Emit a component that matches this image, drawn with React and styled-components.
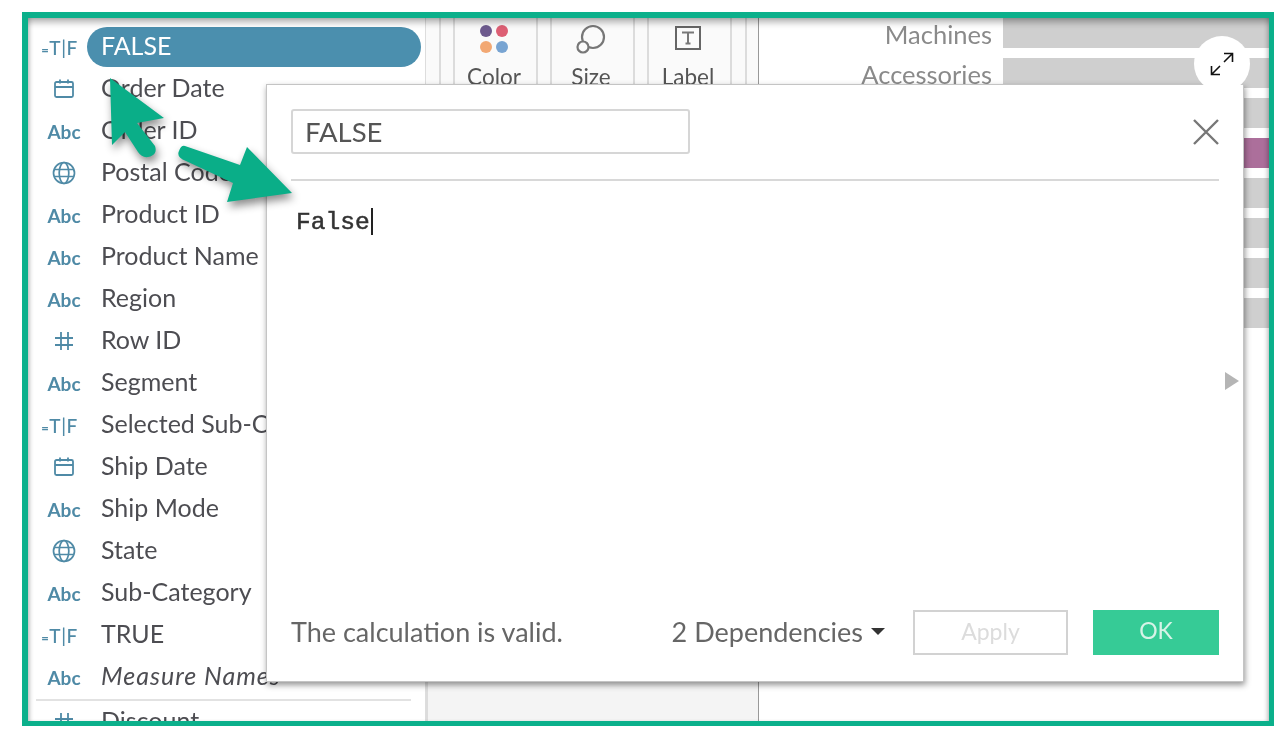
import styled, { createGlobalStyle } from 'styled-components';

const GlobalStyle = createGlobalStyle`
  html, body {
    margin: 0;
    padding: 0;
    background: #fff;
    font-family: "Lato", "Liberation Sans", sans-serif;
  }
`;

const FIELDS = [
  { type: 'bool', name: 'FALSE', active: true },
  { type: 'date', name: 'Order Date' },
  { type: 'abc', name: 'Order ID' },
  { type: 'geo', name: 'Postal Code' },
  { type: 'abc', name: 'Product ID' },
  { type: 'abc', name: 'Product Name' },
  { type: 'abc', name: 'Region' },
  { type: 'num', name: 'Row ID' },
  { type: 'abc', name: 'Segment' },
  { type: 'bool', name: 'Selected Sub-Category' },
  { type: 'date', name: 'Ship Date' },
  { type: 'abc', name: 'Ship Mode' },
  { type: 'geo', name: 'State' },
  { type: 'abc', name: 'Sub-Category' },
  { type: 'bool', name: 'TRUE' },
  { type: 'abc', name: 'Measure Names', italic: true },
];

const BARS = [
  { label: 'Machines' },
  { label: 'Accessories' },
  { label: '' },
  { label: '', hot: true },
  { label: '' },
  { label: '' },
  { label: '' },
  { label: '' },
];

const CalendarIcon = () => (
  <svg width="22" height="22" viewBox="0 0 22 22" fill="none" stroke="#4f8aa6" strokeWidth="1.8">
    <rect x="2" y="4" width="18" height="15" rx="1.5" />
    <path d="M2 9h18M7 1.5v4M15 1.5v4" />
  </svg>
);

const GlobeIcon = () => (
  <svg width="24" height="24" viewBox="0 0 24 24" fill="none" stroke="#4f8aa6" strokeWidth="1.7">
    <circle cx="12" cy="12" r="10.5" />
    <ellipse cx="12" cy="12" rx="4.8" ry="10.5" />
    <path d="M2 8.5h20M2 15.5h20" />
  </svg>
);

const HashIcon = () => (
  <svg width="22" height="22" viewBox="0 0 22 22" fill="none" stroke="#4f8aa6" strokeWidth="1.8">
    <path d="M8 2v18M15 2v18M2 8h18M2 15h18" />
  </svg>
);

const FieldIcon = ({ type }) => {
  if (type === 'date') return <CalendarIcon />;
  if (type === 'geo') return <GlobeIcon />;
  if (type === 'num') return <HashIcon />;
  if (type === 'bool') {
    return (
      <BoolMark>
        <small>=</small>T|F
      </BoolMark>
    );
  }
  return <AbcMark>Abc</AbcMark>;
};

const App = () => (
  <>
    <GlobalStyle />
    <Frame>
      <Sidebar>
        {FIELDS.map((field) => (
          <FieldRow key={field.name}>
            <IconCell>
              <FieldIcon type={field.type} />
            </IconCell>
            <FieldName $active={field.active} $italic={field.italic}>
              {field.name}
            </FieldName>
          </FieldRow>
        ))}
        <SideDivider />
        <FieldRow>
          <IconCell>
            <HashIcon />
          </IconCell>
          <FieldName>Discount</FieldName>
        </FieldRow>
      </Sidebar>

      <Shelves>
        <CardStrip>
          <Gutter $w={15} />
          <Gutter $w={14} />
          <MarkCard>
            <svg width="34" height="30" viewBox="0 0 34 30">
              <circle cx="9" cy="7" r="6" fill="#6d5a8e" />
              <circle cx="25" cy="7" r="6" fill="#dd5f74" />
              <circle cx="9" cy="23" r="6" fill="#f2a873" />
              <circle cx="25" cy="23" r="6" fill="#78a4d2" />
            </svg>
            <CardLabel>Color</CardLabel>
          </MarkCard>
          <Gutter $w={14} />
          <MarkCard>
            <svg width="30" height="30" viewBox="0 0 30 30" fill="none" stroke="#777" strokeWidth="2.2">
              <circle cx="17" cy="13" r="11" fill="#fafafa" />
              <circle cx="7" cy="23" r="5.5" fill="#fafafa" />
            </svg>
            <CardLabel>Size</CardLabel>
          </MarkCard>
          <Gutter $w={14} />
          <MarkCard>
            <svg width="30" height="30" viewBox="0 0 30 30" fill="none">
              <rect x="3" y="3" width="24" height="22" stroke="#666" strokeWidth="2" />
              <path d="M10 9.5v-1h10v1M15 8.5v11M12.5 19.5h5" stroke="#777" strokeWidth="2" />
            </svg>
            <CardLabel>Label</CardLabel>
          </MarkCard>
          <Gutter $w={15} />
        </CardStrip>
      </Shelves>

      <View>
        {BARS.map((bar, i) => (
          <BarRow key={i}>
            <BarLabel>{bar.label}</BarLabel>
            <Bar $hot={bar.hot} />
          </BarRow>
        ))}
      </View>

      <Dialog>
        <DialogHeader>
          <NameInput>FALSE</NameInput>
          <svg width="26" height="26" viewBox="0 0 26 26" stroke="#777" strokeWidth="2.4">
            <path d="M1 1l24 24M25 1L1 25" />
          </svg>
        </DialogHeader>
        <Editor>
          <Code>False</Code>
          <Caret />
          <SideArrow />
        </Editor>
        <DialogFooter>
          <ValidText>The calculation is valid.</ValidText>
          <Dependencies>
            2 Dependencies <DownCaret />
          </Dependencies>
          <ApplyButton>Apply</ApplyButton>
          <OkButton>OK</OkButton>
        </DialogFooter>
      </Dialog>

      <ExpandBadge>
        <svg width="24" height="24" viewBox="0 0 24 24" fill="none" stroke="#111" strokeWidth="1.6">
          <path d="M1.5 22.5L22.5 1.5M14 1.5h8.5V10M1.5 14v8.5H10" />
          <path d="M10 14l4-4" stroke="#fff" strokeWidth="4" />
        </svg>
      </ExpandBadge>

      <Arrows viewBox="22 12 1252 714" width="1252" height="714">
        <g fill="#0aae88">
          <path d="M110 78L164 118L137 123L155 146Q158 155 148 157Q142 158 138 152L125 132L112 145Z" />
          <path d="M185 146L240 165L247 147L292 193L227 202L233 183L186 161Q176 157 179 151Q181 145 185 146Z" />
        </g>
      </Arrows>
    </Frame>
  </>
);

export default App;

const Frame = styled.div`
  position: relative;
  display: flex;
  box-sizing: border-box;
  width: 1252px;
  height: 714px;
  margin: 12px 0 0 22px;
  border: 6px solid #0bb08b;
  border-bottom-width: 5px;
  border-right-width: 5px;
  overflow: hidden;
  background: #fff;
  filter: blur(0.5px);

  &::after {
    content: '';
    position: absolute;
    inset: 0;
    box-shadow: inset 0 7px 7px -3px rgba(0, 0, 0, 0.32), inset 4px 0 5px -3px rgba(0, 0, 0, 0.25),
      inset -4px 0 5px -3px rgba(0, 0, 0, 0.25);
    pointer-events: none;
  }
`;

const Sidebar = styled.div`
  flex: 0 0 398px;
  box-sizing: border-box;
  padding-top: 8px;
  border-right: 1px solid #ddd;
`;

const FieldRow = styled.div`
  display: flex;
  align-items: center;
  height: 42px;
`;

const IconCell = styled.div`
  display: flex;
  flex: 0 0 72px;
  align-items: center;
  justify-content: center;
`;

const AbcMark = styled.span`
  font-family: "Lato", sans-serif;
  font-size: 19px;
  font-weight: 700;
  color: #4f8aa6;
`;

const BoolMark = styled.span`
  font-family: "Lato", sans-serif;
  font-size: 19px;
  font-weight: 500;
  letter-spacing: 0.5px;
  color: #4f8aa6;
  margin-left: -9px;

  small {
    font-size: 13px;
    font-weight: 900;
  }
`;

const FieldName = styled.div`
  flex: 1;
  height: 40px;
  margin: 0 4px 0 -13px;
  padding-left: 14px;
  border-radius: 20px;
  font-size: 25px;
  line-height: 37px;
  letter-spacing: ${(p) => (p.$italic ? '1px' : '0')};
  font-style: ${(p) => (p.$italic ? 'italic' : 'normal')};
  color: ${(p) => (p.$active ? '#fff' : '#4d4d52')};
  background: ${(p) => (p.$active ? '#4b8fae' : 'transparent')};
  white-space: nowrap;
`;

const SideDivider = styled.div`
  height: 2px;
  margin: 1px 14px 0 8px;
  background: #e2e2e2;
`;

const Shelves = styled.div`
  flex: 0 0 333px;
  box-sizing: border-box;
  border-right: 1px solid #999;
  border-left: 2px solid #dcdcdc;
  background: #f4f4f4;
`;

const CardStrip = styled.div`
  display: flex;
  height: 80px;
  margin-left: -2px;
  background: #fafafa;
`;

const Gutter = styled.div`
  box-sizing: border-box;
  flex: 0 0 ${(p) => p.$w}px;
  border-right: 2px solid #dcdcdc;
`;

const MarkCard = styled.div`
  display: flex;
  flex-direction: column;
  align-items: center;
  box-sizing: border-box;
  flex: 0 0 83px;
  padding: 6px 3px 0 0;
  border-right: 2px solid #dcdcdc;
`;

const CardLabel = styled.div`
  margin-top: 9px;
  font-size: 22.5px;
  line-height: 28px;
  color: #555;
`;

const View = styled.div`
  flex: 1;
  min-width: 0;
`;

const BarRow = styled.div`
  display: flex;
  height: 40px;
`;

const BarLabel = styled.div`
  flex: 0 0 233px;
  padding-top: 2px;
  text-align: right;
  font-size: 25.5px;
  line-height: 28px;
  color: #8a8a8a;
`;

const Bar = styled.div`
  flex: 1;
  height: 30px;
  margin-left: 11px;
  background: ${(p) => (p.$hot ? '#ac6f9b' : '#cfcfcf')};
`;

const Dialog = styled.div`
  position: absolute;
  left: 238px;
  top: 66px;
  display: flex;
  flex-direction: column;
  box-sizing: border-box;
  width: 978px;
  height: 598px;
  padding: 24px 24px 26px;
  background: #fff;
  border: 1px solid #c4c4c4;
  box-shadow: 1px 3px 6px rgba(0, 0, 0, 0.42);
`;

const DialogHeader = styled.div`
  display: flex;
  align-items: center;
  justify-content: space-between;
  padding: 0 0 25px;
  border-bottom: 2px solid #d8d8d8;
`;

const NameInput = styled.div`
  box-sizing: border-box;
  width: 399px;
  height: 45px;
  padding-left: 12px;
  border: 2px solid #d6d6d6;
  border-radius: 3px;
  font-size: 27.5px;
  line-height: 41px;
  color: #555;
`;

const Editor = styled.div`
  position: relative;
  flex: 1;
  display: flex;
  align-items: flex-start;
  padding: 27px 0 0 5px;
`;

const Code = styled.span`
  font-family: "Liberation Mono", monospace;
  font-size: 24.6px;
  line-height: 30px;
  -webkit-text-stroke: 0.5px #333;
  color: #333;
`;

const Caret = styled.span`
  width: 2px;
  height: 27px;
  margin-left: 1px;
  background: #222;
`;

const SideArrow = styled.span`
  position: absolute;
  right: -20px;
  top: 191px;
  border-style: solid;
  border-width: 9px 0 9px 14px;
  border-color: transparent transparent transparent #b5b5b5;
`;

const DialogFooter = styled.div`
  display: flex;
  align-items: center;
  height: 45px;
`;

const ValidText = styled.div`
  flex: 1;
  margin-top: -2px;
  font-size: 27px;
  color: #666;
`;

const Dependencies = styled.div`
  display: flex;
  align-items: center;
  gap: 8px;
  margin-top: -2px;
  margin-right: 28px;
  font-size: 27px;
  color: #666;
`;

const DownCaret = styled.span`
  border-style: solid;
  border-width: 7px 7.5px 0;
  border-color: #333 transparent transparent;
`;

const ApplyButton = styled.div`
  box-sizing: border-box;
  width: 155px;
  height: 45px;
  margin-right: 25px;
  border: 2px solid #d2d2d2;
  font-size: 23px;
  line-height: 39px;
  text-align: center;
  color: #dcdcdc;
`;

const OkButton = styled.div`
  width: 126px;
  height: 45px;
  background: #36cb96;
  font-size: 23px;
  line-height: 41px;
  text-align: center;
  color: #d7f3e7;
`;

const ExpandBadge = styled.div`
  position: absolute;
  left: 1166px;
  top: 18px;
  display: flex;
  align-items: center;
  justify-content: center;
  width: 56px;
  height: 56px;
  border-radius: 50%;
  background: #fff;
`;

const Arrows = styled.svg`
  position: absolute;
  left: -6px;
  top: -6px;
  filter: drop-shadow(2px 5px 4px rgba(0, 0, 0, 0.45));
  pointer-events: none;
`;
